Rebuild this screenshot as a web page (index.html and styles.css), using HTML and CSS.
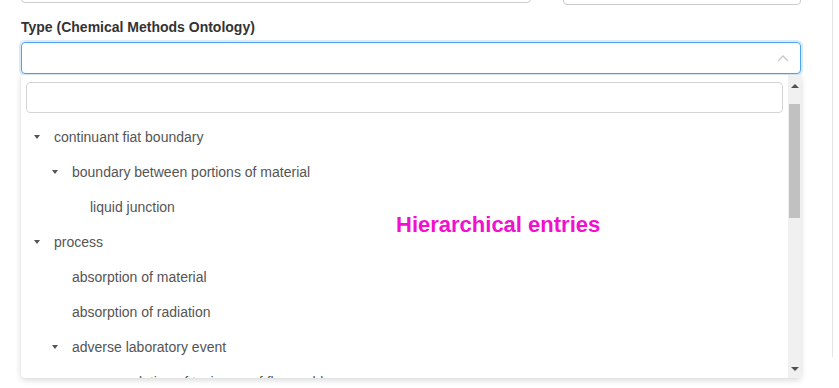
FILE: index.html
```html
<!DOCTYPE html>
<html>
<head>
<meta charset="utf-8">
<link rel="stylesheet" href="styles.css">
</head>
<body>
<div class="page">
  <div class="form">
    <div class="top-row">
      <div class="input input-wide"></div>
      <div class="input input-narrow"></div>
    </div>
    <div class="group">
      <label class="label">Type (Chemical Methods Ontology)</label>
      <div class="select-wrap">
        <div class="select">
          <svg class="chevron" width="12" height="8" viewBox="0 0 12 8"><polyline points="1,7 6,2 11,7" fill="none" stroke="#c8c8c8" stroke-width="1.3"/></svg>
        </div>
        <div class="dropdown">
          <div class="dd-main">
            <div class="search"></div>
            <ul class="tree">
              <li class="row"><span class="caret"></span><span>continuant fiat boundary</span></li>
              <li class="row l1"><span class="caret"></span><span>boundary between portions of material</span></li>
              <li class="row l2"><span class="nocaret"></span><span>liquid junction</span></li>
              <li class="row"><span class="caret"></span><span>process</span></li>
              <li class="row l1"><span class="nocaret"></span><span>absorption of material</span></li>
              <li class="row l1"><span class="nocaret"></span><span>absorption of radiation</span></li>
              <li class="row l1"><span class="caret"></span><span>adverse laboratory event</span></li>
              <li class="row l2"><span class="nocaret"></span><span>accumulation of toxic gas of flammables</span></li>
            </ul>
          </div>
          <div class="scrollbar">
            <span class="arrow-up"></span>
            <span class="thumb"></span>
            <span class="arrow-down"></span>
          </div>
        </div>
        <div class="note">Hierarchical entries</div>
      </div>
    </div>
    <div class="group next">
      <label class="label">Data location</label>
    </div>
  </div>
</div>
</body>
</html>
```
FILE: styles.css
```css
* { box-sizing: border-box; }
html, body {
  margin: 0;
  padding: 0;
  width: 839px;
  height: 388px;
  overflow: hidden;
  background: #fff;
  font-family: "Liberation Sans", Arial, sans-serif;
  color: #333;
}
.page {
  width: 833px;
  height: 388px;
  border-right: 1px solid #e3e3e3;
}
.form {
  padding-left: 21px;
  width: 802px;
}
.top-row {
  display: flex;
  gap: 32px;
  margin-top: -31px;
}
.input {
  border: 1px solid #ccc;
  border-radius: 4px;
  height: 34px;
  background: #fff;
}
.input-wide { width: 510px; }
.input-narrow { width: 238px; height: 36px; }
.group {
  margin-top: 12px;
}
.label {
  display: block;
  font-size: 14px;
  font-weight: bold;
  line-height: 20px;
  color: #333;
  margin-bottom: 5px;
}
.select-wrap {
  position: relative;
}
.select {
  height: 32px;
  width: 780px;
  border: 1px solid #4ea4ef;
  border-radius: 4px;
  box-shadow: 0 0 0 2px rgba(102, 175, 233, 0.25);
  display: flex;
  align-items: center;
  justify-content: flex-end;
  padding-right: 11px;
}
.chevron { display: block; }
.dropdown {
  position: absolute;
  left: 0;
  top: 33px;
  width: 780px;
  height: 303px;
  background: #fff;
  border-radius: 0 0 4px 4px;
  box-shadow: 0 2px 6px rgba(0, 0, 0, 0.16);
  display: flex;
  overflow: hidden;
  z-index: 2;
}
.dd-main {
  flex: 1;
  padding: 7px 5px 0 5px;
  overflow: hidden;
}
.search {
  height: 31px;
  border: 1px solid #d4d4d4;
  border-radius: 4px;
}
.tree {
  list-style: none;
  margin: 6px 0 0 0;
  padding: 0;
}
.row {
  height: 35px;
  display: flex;
  align-items: center;
  padding-left: 8px;
  font-size: 14px;
  color: #555;
}
.row.l1 { padding-left: 26px; }
.row.l2 { padding-left: 44px; }
.caret, .nocaret {
  width: 20px;
  flex: none;
  display: flex;
  align-items: center;
}
.caret::before {
  content: "";
  width: 0;
  height: 0;
  border-left: 3.5px solid transparent;
  border-right: 3.5px solid transparent;
  border-top: 4px solid #555;
  margin-top: 1px;
}
.scrollbar {
  width: 13px;
  background: #f0f0f0;
  display: flex;
  flex-direction: column;
  align-items: center;
}
.arrow-up {
  margin-top: 9px;
  width: 0;
  height: 0;
  border-left: 4px solid transparent;
  border-right: 4px solid transparent;
  border-bottom: 4px solid #505050;
}
.thumb {
  margin-top: 16px;
  width: 11px;
  height: 114px;
  background: #c1c1c1;
}
.arrow-down {
  margin-top: auto;
  margin-bottom: 7px;
  width: 0;
  height: 0;
  border-left: 4px solid transparent;
  border-right: 4px solid transparent;
  border-top: 4px solid #505050;
}
.note {
  position: absolute;
  left: 375px;
  top: 170px;
  z-index: 3;
  font-size: 22px;
  font-weight: bold;
  color: #f20fcd;
  line-height: 26px;
}
.group.next {
  margin-top: 312px;
}
```
